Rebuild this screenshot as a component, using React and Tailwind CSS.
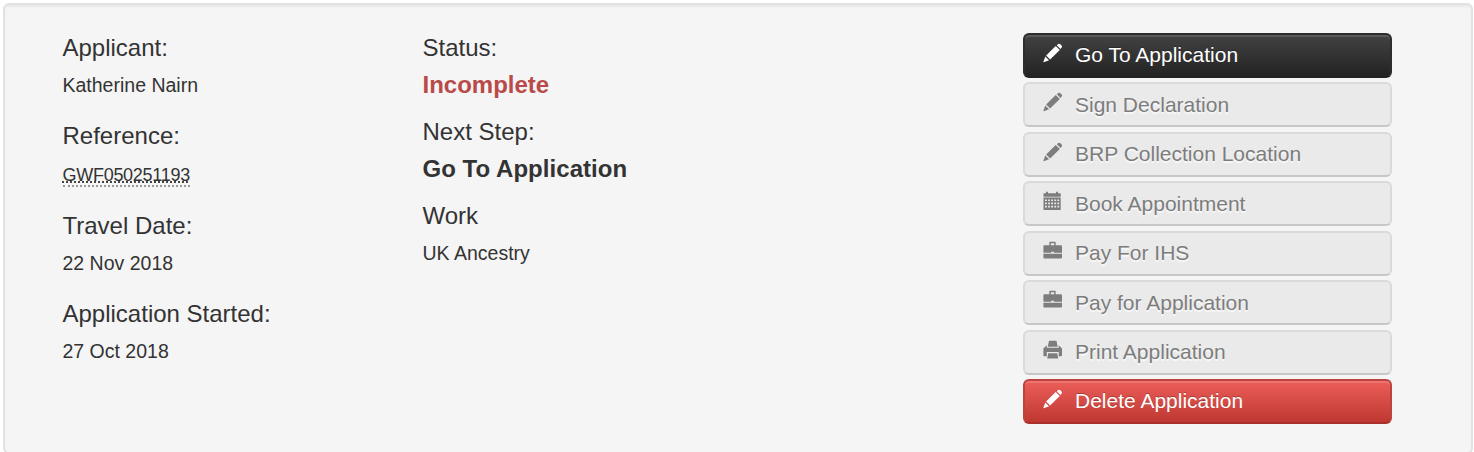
import clsx from "clsx";

const PencilIcon = () => (
  <svg viewBox="0 0 20 20" className="h-5 w-5" fill="currentColor">
    <path d="M13.8 2.2 15.2 1.1q1.2-.9 2.2.1l1.2 1.2q1 1 .1 2.2L17.5 6Z" />
    <path d="M12.7 2.9 16.8 7 7.1 16.5 3.1 12.5Z" />
    <path d="M2.3 13.4 6.1 17.2 1.4 19.1q-1.2.3-.9-.9Z" />
  </svg>
);

const CalendarIcon = () => (
  <svg viewBox="0 0 20 20" className="h-5 w-5" fill="currentColor">
    <path d="M3 .8h2v1.5h8V.8h2v1.5h2.7v3.5H.5V2.3H3Z" />
    <path
      fillRule="evenodd"
      d="M.5 6.6h17.2v12.3H.5ZM2 8.4v1.6h1.8v-1.6Zm3.1 0v1.6h1.8v-1.6Zm3.1 0v1.6h1.8v-1.6Zm3.1 0v1.6h1.8v-1.6Zm3.1 0v1.6h1.8v-1.6ZM2 11.6v1.6h1.8v-1.6Zm3.1 0v1.6h1.8v-1.6Zm3.1 0v1.6h1.8v-1.6Zm3.1 0v1.6h1.8v-1.6Zm3.1 0v1.6h1.8v-1.6ZM2 14.8v1.6h1.8v-1.6Zm3.1 0v1.6h1.8v-1.6Zm3.1 0v1.6h1.8v-1.6Zm3.1 0v1.6h1.8v-1.6Zm3.1 0v1.6h1.8v-1.6Z"
    />
  </svg>
);

const BriefcaseIcon = () => (
  <svg viewBox="0 0 20 20" className="h-5 w-5" fill="currentColor">
    <path
      fillRule="evenodd"
      d="M6.3 4.2V1.6q0-.9.9-.9h4.6q.9 0 .9.9v2.6h5.2q1.1 0 1.1 1.1v6.5h-8v-1H8.2v1H.4V5.3q0-1.1 1.1-1.1ZM7.8 2.2v2h3.5v-2Z"
    />
    <path d="M.4 12.7H19v3.8q0 .9-.9.9H1.3q-.9 0-.9-.9Z" />
  </svg>
);

const PrinterIcon = () => (
  <svg viewBox="0 0 20 20" className="h-5 w-5" fill="currentColor">
    <path d="M6 .7h7.5L14.7 6.7H4.8Z" />
    <path
      fillRule="evenodd"
      d="M3.8 5.2V7.7h11.9V5.2L19 8.6v6.8q0 .8-.8.8h-2.5V12H3.8v4.2H1.2q-.8 0-.8-.8V8.6Z"
    />
    <path d="M5.2 13.2h9l1 5.3H4.2Z" />
  </svg>
);

const actions = [
  { label: "Go To Application", icon: PencilIcon, variant: "dark" },
  { label: "Sign Declaration", icon: PencilIcon },
  { label: "BRP Collection Location", icon: PencilIcon },
  { label: "Book Appointment", icon: CalendarIcon },
  { label: "Pay For IHS", icon: BriefcaseIcon },
  { label: "Pay for Application", icon: BriefcaseIcon },
  { label: "Print Application", icon: PrinterIcon },
  { label: "Delete Application", icon: PencilIcon, variant: "danger" },
];

const variants = {
  dark: "border-[#2d2d2d] border-b-[#222] bg-linear-to-b from-[#444] to-[#222] bg-origin-border text-white shadow-[inset_0_2px_0_rgba(255,255,255,0.13)] [text-shadow:0_-1px_0_rgba(0,0,0,0.25)]",
  danger:
    "border-[#bd4340] border-b-[#a9302b] bg-linear-to-b from-[#ee5f5b] to-[#bd362f] bg-origin-border text-white shadow-[inset_0_2px_0_rgba(255,255,255,0.15)] [text-shadow:0_-1px_0_rgba(0,0,0,0.25)]",
  disabled:
    "border-[#dadada] border-b-[#c7c7c7] bg-[#eaeaea] text-[#7d7d7d] [text-shadow:0_2px_1px_rgba(255,255,255,0.75)]",
};

function ActionButton({ label, icon: Icon, variant = "disabled" }) {
  return (
    <button
      disabled={variant === "disabled"}
      className={clsx(
        "flex h-[45px] w-full items-start rounded-[6px] border-2 pl-[18px] pt-[5.38px] text-left text-[21px] leading-[30px]",
        variants[variant]
      )}
    >
      <span className="mr-3 mt-[2.6px]">
        <Icon />
      </span>
      {label}
    </button>
  );
}

const Label = ({ children }) => (
  <dt className="text-[24px] leading-[30px]">{children}</dt>
);

const Value = ({ children }) => (
  <dd className="mt-[7px] text-[19.5px] leading-[30px]">{children}</dd>
);

export default function App() {
  return (
    <div className="h-[452px] overflow-hidden bg-white pl-[3px] pr-px pt-[3px] font-['Liberation_Sans',Arial,sans-serif] text-[#333]">
      <div className="flex h-[451px] rounded-[6px] border-2 border-[#e2e2e2] bg-[#f5f5f5] pl-[57.5px] pt-7 shadow-[inset_0_2px_2px_rgba(0,0,0,0.05)]">
        {/* Applicant details */}
        <dl className="w-[360px]">
          <Label>Applicant:</Label>
          <Value>Katherine Nairn</Value>
          <div className="mt-[21px]">
            <Label>Reference:</Label>
            <dd className="mt-[9px] text-[18px] leading-[30px] tracking-[-0.28px]">
              <abbr className="border-b-2 border-dotted border-[#999] underline decoration-dotted">
                GWF050251193
              </abbr>
            </dd>
          </div>
          <div className="mt-[21px]">
            <Label>Travel Date:</Label>
            <Value>22 Nov 2018</Value>
          </div>
          <div className="mt-[21px]">
            <Label>Application Started:</Label>
            <Value>27 Oct 2018</Value>
          </div>
        </dl>

        {/* Progress */}
        <dl className="w-[600.5px]">
          <Label>Status:</Label>
          <dd className="mt-[7px] text-[24px] font-bold leading-[30px] text-[#b94a48]">Incomplete</dd>
          <div className="mt-[17px]">
            <Label>Next Step:</Label>
            <dd className="mt-[7px] text-[24px] font-bold leading-[30px] tracking-[0.04px]">
              Go To Application
            </dd>
          </div>
          <div className="mt-[17px]">
            <Label>Work</Label>
            <Value>UK Ancestry</Value>
          </div>
        </dl>

        {/* Actions */}
        <div className="flex w-[369px] flex-col gap-[4.45px]">
          {actions.map((action) => (
            <ActionButton key={action.label} {...action} />
          ))}
        </div>
      </div>
    </div>
  );
}
